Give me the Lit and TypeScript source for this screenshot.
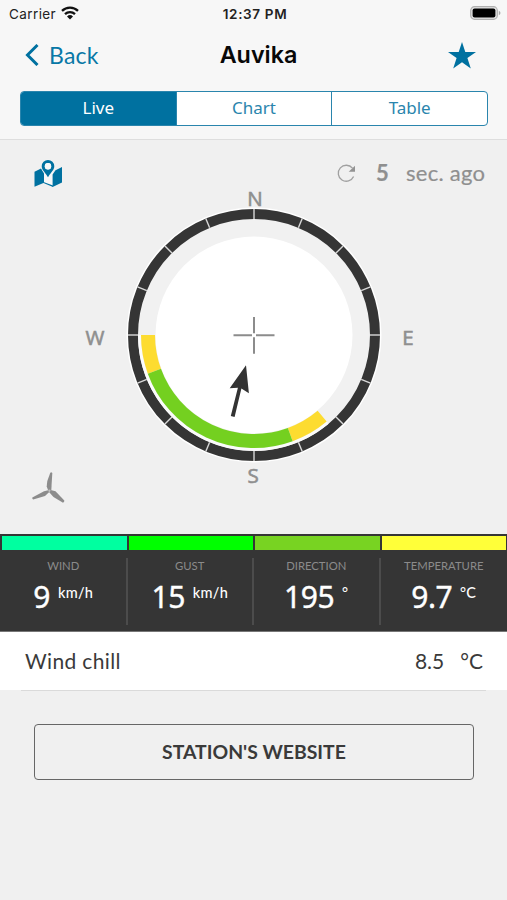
import { LitElement, html, css, svg } from "lit";
import { customElement, property } from "lit/decorators.js";

const CX = 254;
const CY = 195;

// Point at a compass bearing (degrees clockwise from north).
const point = (deg: number, r: number) => {
  const a = (deg * Math.PI) / 180;
  return [CX + r * Math.sin(a), CY - r * Math.cos(a)];
};
const arc = (from: number, to: number, r: number) => {
  const [x1, y1] = point(from, r);
  const [x2, y2] = point(to, r);
  return `M${x1} ${y1}A${r} ${r} 0 0 1 ${x2} ${y2}`;
};

@customElement("wind-compass")
class WindCompass extends LitElement {
  static styles = css`
    :host { display: block; height: 394px; }
    svg { display: block; }
    text { font: 500 20.5px "Open Sans", sans-serif; fill: #8f8f8f; stroke: #8f8f8f; stroke-width: 0.6; text-anchor: middle; }
    .big { font: 400 22px Lato, sans-serif; text-anchor: start; stroke-width: 0.2; }
    .strong { font-weight: 700; }
  `;
  render() {
    const ticks = Array.from({ length: 16 }, (_, i) => i * 22.5);
    return html`<svg width="507" height="394" viewBox="0 0 507 394">
      <path d="M43.6 29V43L53 46.6V29Z" fill="#f8f8f8" />
      <g fill="#0071a0">
        <path d="M34.5 31.8 41 28.4 44 33.5V42.8L34.5 46.8ZM52.6 34.5 55.5 30.2 62 27V42.4L52.6 46.9Z" />
        <path d="M43.5 42 53 45.6V46.9L43.5 43Z" />
        <path fill-rule="evenodd" stroke="#f4f4f4" stroke-width="0.9" paint-order="stroke" d="M48 19.9a6.3 6.3 0 0 1 6.3 6.3c0 4-4.5 7.3-6.3 11-1.8-3.7-6.3-7-6.3-11A6.3 6.3 0 0 1 48 19.9Zm0 3.1a3.2 3.2 0 1 0 0 6.4 3.2 3.2 0 0 0 0-6.4Z" />
        <circle cx="48" cy="26.2" r="3.2" fill="#f8f8f8" />
      </g>
      <path d="M352.5 28.2A8 8 0 1 0 353.6 36.5" fill="none" stroke="#a0a0a0" stroke-width="1.3" />
      <path d="M355 25.8V31.8H348.7Z" fill="#939393" />
      <text class="big strong" x="376" y="40.5">5</text>
      <text class="big" x="406" y="40.5" textLength="79">sec. ago</text>
      <circle cx=${CX} cy=${CY} r="127.5" fill="#fff" />
      <circle cx=${CX} cy=${CY} r="121" fill="#f1f1f1" stroke="#353535" stroke-width="10" />
      <path d=${arc(140, 270, 114.5)} fill="none" stroke="#fbfbfb" stroke-width="3" />
      <circle cx=${CX} cy=${CY} r="98.5" fill="#fff" />
      ${ticks.map((t) => {
        const [x1, y1] = point(t, 116);
        const [x2, y2] = point(t, 126);
        return svg`<line x1=${x1} y1=${y1} x2=${x2} y2=${y2} stroke="#d8d8d8" stroke-width="1.4" />`;
      })}
      <g fill="none" stroke-width="14">
        <path d=${arc(140, 160, 106)} stroke="#fddc30" />
        <path d=${arc(250, 270, 106)} stroke="#fddc30" />
        <path d=${arc(160, 250, 106)} stroke="#74d020" />
      </g>
      <path d="M233.5 195.3H252M256 195.3H274.5M254 177V193.3M254 197.3V213.7" stroke="#8c8c8c" stroke-width="2" />
      <path d="M246 225.2 248.9 253.3 241.4 248.6 234.6 277 230.8 276 237.9 247.8 229.7 248.3Z" fill="#333" />
      <text x="255" y="66">N</text>
      <text x="95" y="204.5">W</text>
      <text x="408" y="204.5">E</text>
      <text x="253" y="343">S</text>
      <g fill="#8c8c8c">
        <path d="M50.3 332.8Q51.2 331.8 52.3 333L51.3 350 48.2 350.5 46.7 346.5 47.3 341Z" />
        <path d="M32.3 357.5 44 351.3 49.2 350 48.7 352.6 45 356 33.2 359.6Q32 359 32.3 357.5Z" />
        <path d="M49.8 349.8 55.5 351.2 64.3 360.5Q64.6 362 63 362.8L53.5 357 49.2 352.3Z" />
      </g>
      <circle cx="49.4" cy="350.6" r="1.1" fill="#c0c0c0" />
    </svg>`;
  }
}

@customElement("stat-tile")
class StatTile extends LitElement {
  @property() label = "";
  @property() value = "";
  @property() unit = "";
  @property() tone = "";
  static styles = css`
    :host { flex: 1; display: flex; flex-direction: column; align-items: center; min-width: 0; color: #fff; }
    .bar { align-self: stretch; height: 14px; margin: 2px 1px 0; }
    .cell { align-self: stretch; display: flex; flex-direction: column; align-items: center; height: 67px; margin-top: 8px; border-right: 2px solid #4c4c4c; }
    :host(:last-child) .cell { border-right: 0; }
    .label { font: 11.3px/16px Lato, sans-serif; color: #8b8b8b; }
    .row { display: flex; align-items: flex-start; gap: 8px; margin-top: 4px; }
    .value { font: 400 30px/38px "Noto Sans", sans-serif; letter-spacing: -0.5px; -webkit-text-stroke: 0.4px #fff; }
    .unit { font: 500 14.5px/20px Lato, sans-serif; letter-spacing: 0.25px; margin-top: 5px; }
  `;
  render() {
    return html`<div class="bar" style="background:${this.tone}"></div>
      <div class="cell"><div class="label">${this.label}</div>
      <div class="row"><span class="value">${this.value}</span><span class="unit">${this.unit}</span></div></div>`;
  }
}

@customElement("app-root")
class AppRoot extends LitElement {
  static styles = css`
    :host { display: flex; flex-direction: column; height: 900px; background: #f0f0f0; font-family: Lato, sans-serif; overflow: hidden; }
    .top { height: 139px; background: #f7f7f7; border-bottom: 1px solid #dedede; display: flex; flex-direction: column; flex: none; }
    .status { display: grid; grid-template-columns: 1fr auto 1fr; align-items: center; height: 28px; padding: 0 6px 0 9px; font: 13.5px/28px Inter, sans-serif; color: #222; }
    .carrier { display: flex; align-items: center; gap: 5px; letter-spacing: 0.4px; }
    .carrier svg { margin-top: -2px; }
    .time { font-weight: 600; letter-spacing: 0.65px; }
    .battery { justify-self: end; margin-top: -2px; }
    .nav { display: grid; grid-template-columns: 1fr auto 1fr; align-items: center; height: 54px; padding: 0 31px 0 25px; }
    .back { display: flex; align-items: center; gap: 10px; color: #0878a6; font: 23px/30px Lato, sans-serif; letter-spacing: 0.2px; }
    .back span { margin-top: -1px; }
    .title { font: 600 23.3px/30px Inter, sans-serif; color: #080808; margin-left: 16px; }
    .star { justify-self: end; }
    .tabs { display: flex; height: 33px; margin: 9px 19px 0 20px; border: 1px solid #2a85ad; border-radius: 4px; background: #fff; overflow: hidden; }
    .tab { flex: 1; text-align: center; font: 17px/32px "Noto Sans", sans-serif; color: #2a85ad; }
    .tab + .tab { border-left: 1px solid #2a85ad; }
    .tab.active { background: #0071a0; color: #fff; }
    .stats { display: flex; height: 97px; padding-left: 1px; background: #353535; flex: none; border-bottom: 1px solid #777; }
    .chill { display: flex; height: 58px; background: #fff; padding: 0 24px 0 25px; font-size: 21px; line-height: 57px; color: #3a3a3a; flex: none; }
    .name { flex: 1; letter-spacing: 0.35px; }
    .deg { margin-left: 16px; }
    .rule { height: 1px; margin: 0 21px; background: #dadada; flex: none; }
    .site { margin: 33px 33px 0 34px; height: 54px; border: 1px solid #666; border-radius: 4px; text-align: center; font: 700 19.4px/54px Lato, sans-serif; color: #3a3a3a; }
  `;
  render() {
    return html`<div class="top">
        <div class="status">
          <div class="carrier"><span>Carrier</span>
            <svg width="18" height="14" viewBox="0 0 18 14" fill="none" stroke="#111" stroke-width="2.3"><path d="M1 4.9a11.5 11.5 0 0 1 16 0M4 8.2a7.2 7.2 0 0 1 10 0" /><path d="M9 13.5 6 10.5a4.3 4.3 0 0 1 6 0Z" fill="#111" stroke="none" /></svg>
          </div>
          <div class="time">12:37 PM</div>
          <svg class="battery" width="31" height="14" viewBox="0 0 31 14"><rect x=".7" y=".7" width="26.6" height="12.6" rx="3.8" fill="#e4e4e4" stroke="#b0b0b0" stroke-width="1.2" /><rect x="2.6" y="2.6" width="22.8" height="8.8" rx="2" fill="#000" /><path d="M28.8 4.8q1.7 1 1.7 2.2t-1.7 2.2Z" fill="#aaa" /></svg>
        </div>
        <div class="nav">
          <div class="back"><svg width="14" height="22" viewBox="0 0 14 22"><path d="M12.5 1 2.5 11l10 10" fill="none" stroke="#0071a0" stroke-width="3" /></svg><span>Back</span></div>
          <div class="title">Auvika</div>
          <svg class="star" width="28" height="27" viewBox="0 0 28 27"><path d="M14 0 17.3 9.9H28L19.4 16 22.8 26.5 14 20.2 5.2 26.5 8.6 16 0 9.9H10.7Z" fill="#0071a0" /></svg>
        </div>
        <div class="tabs"><div class="tab active">Live</div><div class="tab">Chart</div><div class="tab">Table</div></div>
      </div>
      <wind-compass></wind-compass>
      <div class="stats">
        <stat-tile label="WIND" value="9" unit="km/h" tone="#00ffa0"></stat-tile>
        <stat-tile label="GUST" value="15" unit="km/h" tone="#00ff00"></stat-tile>
        <stat-tile label="DIRECTION" value="195" unit="°" tone="#78d322"></stat-tile>
        <stat-tile label="TEMPERATURE" value="9.7" unit="°C" tone="#ffff39"></stat-tile>
      </div>
      <div class="chill"><span class="name">Wind chill</span><span>8.5</span><span class="deg">°C</span></div>
      <div class="rule"></div>
      <div class="site">STATION'S WEBSITE</div>`;
  }
}
